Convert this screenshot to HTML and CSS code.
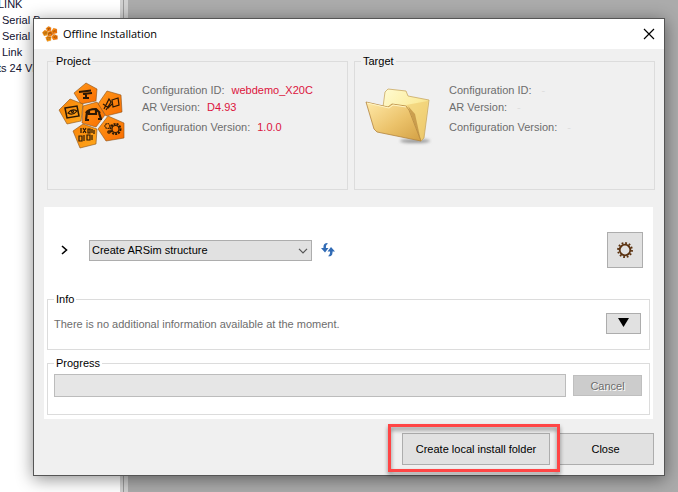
FILE: index.html
```html
<!DOCTYPE html>
<html lang="en">
<head>
<meta charset="utf-8">
<title>Offline Installation</title>
<link rel="stylesheet" href="styles.css">
</head>
<body>
<div class="workspace">
  <ul class="tree">
    <li class="outdent">LINK</li>
    <li>Serial Bus</li>
    <li>Serial Bus</li>
    <li>Link</li>
    <li class="outdent">ts 24 VDC</li>
  </ul>
  <div class="splitter"></div>
</div>
<main class="dialog">
  <header class="titlebar">
    <svg class="app-icon" viewBox="0 0 68 68" aria-hidden="true"><use href="#petals"/><use href="#glyphs" opacity=".6"/></svg>
    <h1>Offline Installation</h1>
    <button class="close" aria-label="Close window"><svg width="12" height="12" viewBox="0 0 12 12"><path d="M1 1 11 11M11 1 1 11" stroke="#000" stroke-width="1.2" fill="none"/></svg></button>
  </header>
  <div class="summary">
    <fieldset class="group card">
      <legend>Project</legend>
      <svg class="picture" viewBox="0 0 68 68" aria-hidden="true">
        <defs>
          <linearGradient id="orange" x1="0" y1="0" x2="1" y2="1"><stop offset="0" stop-color="#ff9a1c"/><stop offset="1" stop-color="#f96c00"/></linearGradient>
          <linearGradient id="amber" x1="0" y1="0" x2="1" y2="1"><stop offset="0" stop-color="#f78208"/><stop offset="1" stop-color="#ffa91c"/></linearGradient>
        </defs>
        <g id="petals" stroke="#8a5017" stroke-width=".6" stroke-linejoin="round">
          <path d="M16 11 28 1 39 7 38 19 23 22Z" fill="url(#orange)"/>
          <path d="M40 22 49 9 63 13 64 30 48 34Z" fill="url(#orange)"/>
          <path d="M1 28 12 17 25 22 23 39 9 42Z" fill="url(#amber)"/>
          <path d="M25 24 39 20 47 33 38 45 24 41Z" fill="url(#orange)"/>
          <path d="M40 47 50 34 66 41 66 56 48 59Z" fill="url(#orange)"/>
          <path d="M15 49 25 42 39 47 38 62 22 66Z" fill="url(#amber)"/>
        </g>
        <g id="glyphs" fill="none" stroke="#2b1805" stroke-width="1.200">
          <path d="M21 10 33 8.500M25 12l9-1M28 12v4M25 16h6" stroke-width="2"/>
          <path d="M46 27 51 17 53 20 48 28M45 22l6 4M54 18l6-2 1 7-6 2ZM50 26l5-5"/>
          <path d="M7 26 19 24 21 34 9 36Z" stroke-width="1.500"/><path d="M10 31q4-5 9-2q-4 5-9 2Z"/><circle cx="14.500" cy="29.500" r="1"/>
          <path d="M28 31q2-4 10-4l4 4M29 30l-1 8M31 28v4h7v-4M41 31l2 6M27 38h4M40 37h4" stroke-width="2.200"/>
          <circle cx="57.500" cy="47" r="5" stroke-width="2" stroke-dasharray="2 1"/><circle cx="57.500" cy="47" r="3.500"/><circle cx="49.500" cy="44" r="2.500" stroke-dasharray="1.500 .8"/><circle cx="51" cy="50" r="1.200"/>
          <path d="M23 46v5M25 46l3 5M28 46l-3 5M30 47h2v4h-2ZM34 47v4M36 48v4M21 54h3v5h-3ZM26 53v6M29 53h3v5h-3ZM34 53v5"/>
        </g>
      </svg>
      <dl class="facts">
        <div><dt>Configuration ID:</dt><dd>webdemo_X20C</dd></div>
        <div><dt>AR Version:</dt><dd>D4.93</dd></div>
        <div class="apart"><dt>Configuration Version:</dt><dd>1.0.0</dd></div>
      </dl>
    </fieldset>
    <fieldset class="group card">
      <legend>Target</legend>
      <svg class="picture" viewBox="0 0 68 68" aria-hidden="true">
        <defs>
          <linearGradient id="front" x1="0" y1="0" x2="1" y2="1"><stop offset="0" stop-color="#ffe9a8"/><stop offset=".55" stop-color="#ebc26a"/><stop offset="1" stop-color="#d3a044"/></linearGradient>
          <linearGradient id="back" x1="0" y1="0" x2="1" y2="1"><stop offset="0" stop-color="#fffbd2"/><stop offset=".5" stop-color="#fbec9f"/><stop offset="1" stop-color="#e5bb58"/></linearGradient>
          <filter id="soft" x="-20%" y="-80%" width="140%" height="260%"><feGaussianBlur stdDeviation="1.500"/></filter>
        </defs>
        <ellipse cx="50" cy="59" rx="15" ry="2" fill="#999" filter="url(#soft)"/>
        <path d="M18 25 20 10 23 7 41 9 43 14 64 18 59 56 56 59 25 45Z" fill="url(#back)" stroke="#c9a862" stroke-width=".8"/>
        <path d="M41 23 63 19 58 56 56 59Z" fill="#efcc70" opacity=".65"/>
        <path d="M43 24 50 32 56 59Z" fill="#b9873a" opacity=".7"/>
        <path d="M1 20 23 25 27 22 41 24 44 28 56 59 12 50 9 47Z" fill="url(#front)" stroke="#b3843d" stroke-width=".8" stroke-linejoin="round"/>
        <path d="M2 21 24 26 28 23 41 25" fill="none" stroke="#fff5c5"/>
      </svg>
      <dl class="facts">
        <div><dt>Configuration ID:</dt><dd class="none">-</dd></div>
        <div><dt>AR Version:</dt><dd class="none">-</dd></div>
        <div class="apart"><dt>Configuration Version:</dt><dd class="none">-</dd></div>
      </dl>
    </fieldset>
  </div>
  <section class="panel">
    <div class="action">
      <button class="expand" aria-label="Expand"><svg width="7" height="10" viewBox="0 0 7 10"><path d="M1 1 5.500 5 1 9" fill="none" stroke="#000" stroke-width="1.600"/></svg></button>
      <div class="select-wrap">
        <select aria-label="Action"><option>Create ARSim structure</option></select>
        <svg class="chevron" width="10" height="6" viewBox="0 0 10 6" aria-hidden="true"><path d="M1 .8 5 4.800 9 .8" fill="none" stroke="#555" stroke-width="1.200"/></svg>
      </div>
      <button class="refresh" aria-label="Refresh"><svg width="14" height="14" viewBox="0 0 14 14"><path d="M6.500 0Q2 0 2.500 5H0L4 9.500 7.500 5H5Q4.500 2 6.500 1ZM7.500 13.500Q12 13.500 11.500 8.500H14L10 4 6.500 8.500H9Q9.500 11.500 7.500 12.500Z" fill="#316bb5"/></svg></button>
      <button class="gear" aria-label="Settings"><svg width="16" height="16" viewBox="0 0 16 16" fill="none" stroke="#5b3210"><circle cx="8" cy="8" r="5.300" stroke-width="1.800"/><circle cx="8" cy="8" r="7" stroke-width="1.800" stroke-dasharray="1.800 1.865"/></svg></button>
    </div>
    <fieldset class="group info">
      <legend>Info</legend>
      <p>There is no additional information available at the moment.</p>
      <button class="more" aria-label="Show details"><svg width="11" height="9" viewBox="0 0 11 9"><path d="M0 0H11L5.500 9Z"/></svg></button>
    </fieldset>
    <fieldset class="group progress">
      <legend>Progress</legend>
      <progress value="0" max="100" aria-label="Progress"></progress>
      <button class="cancel" disabled>Cancel</button>
    </fieldset>
  </section>
  <footer class="buttons">
    <span class="callout"><button class="create">Create local install folder</button></span>
    <button class="dismiss">Close</button>
  </footer>
</main>
</body>
</html>
```
FILE: styles.css
```css
* { box-sizing: border-box; }

body {
  margin: 0;
  background: #ababab;
  color: #000;
  font: 11px/14px "Liberation Sans", Arial, sans-serif;
  overflow: hidden;
}

button, select { font: inherit; color: inherit; }
svg { display: block; }

button {
  display: flex;
  align-items: center;
  justify-content: center;
  padding: 0;
  border: 1px solid #adadad;
  background: #e1e1e1;
}

.workspace { display: flex; min-height: 100vh; }

.tree {
  width: 120px;
  margin: 0;
  padding: 0 0 0 2px;
  background: #fff;
  color: #101030;
  line-height: 16px;
  list-style: none;
  white-space: nowrap;
  overflow: hidden;
}
.tree li:first-child { margin-top: -4px; }
.tree .outdent { margin-left: -4px; }

.splitter {
  width: 8px;
  border: solid #d0d0d0;
  border-width: 0 4px 0 3px;
  background: #999;
}

.dialog {
  position: absolute;
  top: 18px;
  left: 33px;
  right: 13px;
  border: 1px solid #555;
  background: #f0f0f0;
  box-shadow: 0 3px 16px rgba(0, 0, 0, .45);
}

.titlebar {
  display: flex;
  align-items: center;
  gap: 5px;
  height: 30px;
  padding: 0 9px 0 8px;
  background: #fff;
}
.titlebar h1 {
  flex: 1;
  margin: 0;
  font: 11px/16px "Open Sans", sans-serif;
}
.app-icon { width: 16px; height: 16px; }
.close { border: 0; background: none; }

.group {
  display: flex;
  margin: 0;
  min-width: 0;
  padding: 0 6px;
  border: 1px solid #dcdcdc;
}
.group legend {
  padding: 0 2px;
  line-height: 13px;
}

.summary { display: flex; gap: 6px; padding: 6px 9px 17px 13px; }
.card {
  flex: 1;
  gap: 16px;
  height: 135px;
}
.picture { width: 68px; height: 68px; margin: 14px 0 0 4px; }
.facts { margin: 14px 0 0; color: #6d6d6d; }
.facts div { display: flex; gap: 7px; line-height: 17px; }
.facts .apart { margin-top: 3px; }
.facts dd { margin: 0; color: #dc143c; }
.facts .none { padding-left: 3px; color: #dedede; }

.panel {
  margin: 0 11px 0 10px;
  padding: 0 3px 4px;
  background: #fff;
}
.action {
  display: flex;
  align-items: center;
  height: 86px;
  padding: 0 7px 0 14px;
}
.expand, .refresh { border: 0; background: none; }
.select-wrap { position: relative; width: 223px; margin: 0 9px 0 21px; }
.select-wrap select {
  display: block;
  width: 100%;
  height: 21px;
  padding: 0 2px;
  border: 1px solid #adadad;
  border-radius: 0;
  background: #e1e1e1;
  appearance: none;
}
.chevron { position: absolute; right: 4px; top: 8px; pointer-events: none; }
.gear { width: 36px; height: 36px; margin-left: auto; }

.info { height: 57px; justify-content: space-between; padding-right: 8px; }
.info p { margin: 11px 0 0; color: #6d6d6d; }
.more { width: 35px; height: 21px; margin-top: 7px; padding-bottom: 3px; }

.progress { gap: 7px; height: 58px; margin-top: 7px; padding-right: 7px; }
.progress progress {
  flex: 1;
  height: 23px;
  margin-top: 4px;
  border: 1px solid #bcbcbc;
  background: #e6e6e6;
  appearance: none;
}
.progress progress::-webkit-progress-bar { background: #e6e6e6; }
.cancel {
  width: 69px;
  height: 21px;
  margin-top: 5px;
  border-color: #bfbfbf;
  background: #ccc;
  color: #6d6d6d;
  text-shadow: 1px 1px #fff;
}

.buttons {
  display: flex;
  justify-content: flex-end;
  gap: 7px;
  padding: 14px 10px 10px;
}
.buttons button { height: 32px; }
.create { width: 148px; }
.dismiss { width: 97px; }
.callout { position: relative; z-index: 1; }
.callout::after {
  content: "";
  position: absolute;
  inset: -9px -10px -7px -14px;
  border: 3px solid #ff4545;
  filter: drop-shadow(0 3px 2px rgba(0, 0, 0, .45));
  pointer-events: none;
}
```
